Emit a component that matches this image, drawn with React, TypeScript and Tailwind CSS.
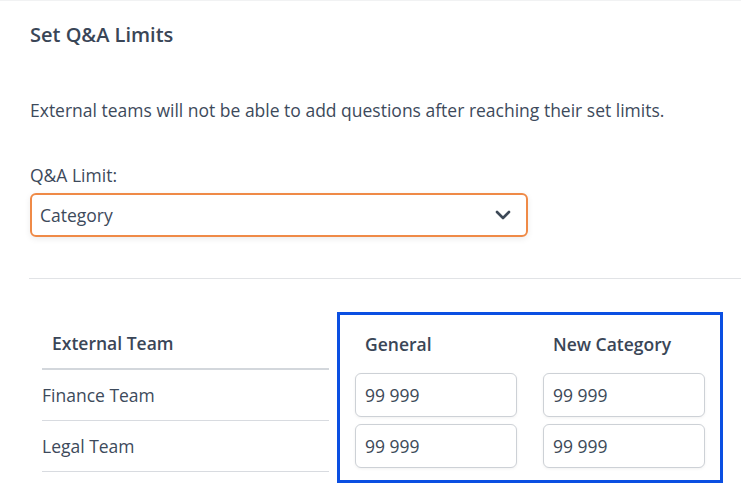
import React from "react";

const teams = [
  { name: "Finance Team", general: "99 999", custom: "99 999" },
  { name: "Legal Team", general: "99 999", custom: "99 999" },
];

const inputClass =
  "h-[44px] w-full rounded-[6px] border border-[#cdd1d6] bg-white px-[9px] text-[17.5px] leading-[24px] text-[#3d4957] shadow-[0_1px_3px_rgba(0,0,0,0.06)] outline-none";

export default function App() {
  return (
    <div
      className="w-[741px] h-[490px] overflow-hidden bg-white border-t border-[#f1f2f3] text-[#3d4a5b]"
      style={{ fontFamily: '"Open Sans", "Liberation Sans", sans-serif' }}
    >
      <div className="pl-[30px]">
        <h1 className="mt-[22px] text-[20px] leading-[24px] font-semibold text-[#3a4657]">Set Q&amp;A Limits</h1>

        <p className="mt-[51px] text-[17.5px] leading-[24px]">
          External teams will not be able to add questions after reaching their set limits.
        </p>

        <label className="block mt-[41px] text-[17.5px] leading-[24px]">Q&amp;A Limit:</label>
        <div className="mt-[6px] flex h-[44px] w-[498px] items-center justify-between rounded-[6px] border-2 border-[#ef8a47] pl-[8px] pr-[15px] shadow-[0_2px_6px_rgba(0,0,0,0.08)]">
          <span className="text-[17.5px] leading-[24px]">Category</span>
          <svg width="16" height="10" viewBox="0 0 16 10" fill="none">
            <path d="M2 2 L8 8 L14 2" stroke="#3d4957" strokeWidth="2.6" strokeLinecap="round" strokeLinejoin="round" />
          </svg>
        </div>

        <div className="-ml-px mt-[41px] h-px bg-[#e1e3e6]" />

        <div className="mt-[33px] flex items-start">
          {/* team names */}
          <div className="mt-[6px] ml-[12px] w-[287px]">
            <div className="flex h-[52px] items-center border-b-2 border-[#d3d7dc] pl-[10px]">
              <span className="text-[17.5px] leading-[24px] font-semibold text-[#3a4657]">External Team</span>
            </div>
            {teams.map((t) => (
              <div key={t.name} className="flex h-[51px] items-center border-b border-[#d8dbe0]">
                <span className="text-[17.5px] leading-[24px]">{t.name}</span>
              </div>
            ))}
          </div>

          {/* limits */}
          <div className="ml-[8px] w-[386px] border-[3px] border-[#0b4fe2] px-[15px] pt-[17px] pb-[12px]">
            <div className="grid grid-cols-2 gap-x-[26px]">
              <div className="pl-[10px] text-[17.5px] leading-[24px] font-semibold text-[#3a4657]">General</div>
              <div className="pl-[10px] text-[17.5px] leading-[24px] font-semibold text-[#3a4657]">New Category</div>
            </div>
            <div className="mt-[17px] grid grid-cols-2 gap-x-[26px] gap-y-[7px]">
              {teams.map((t) => (
                <React.Fragment key={t.name}>
                  <input className={inputClass} defaultValue={t.general} />
                  <input className={inputClass} defaultValue={t.custom} />
                </React.Fragment>
              ))}
            </div>
          </div>
        </div>
      </div>
    </div>
  );
}
